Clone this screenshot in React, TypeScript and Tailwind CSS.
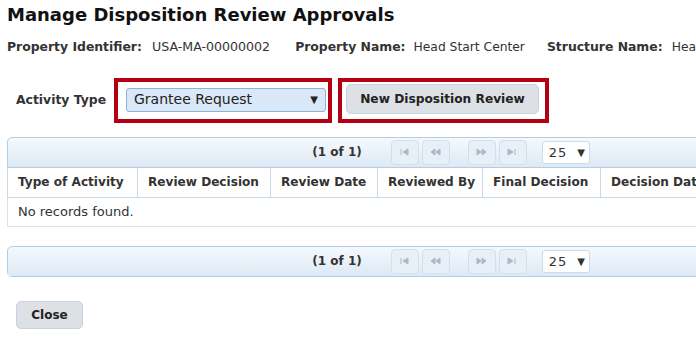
import React from 'react';

const columns = [
  { label: 'Type of Activity', w: 'w-[129px]' },
  { label: 'Review Decision', w: 'w-[133px]' },
  { label: 'Review Date', w: 'w-[107px]' },
  { label: 'Reviewed By', w: 'w-[105px]' },
  { label: 'Final Decision', w: 'w-[118px]' },
  { label: 'Decision Date', w: 'w-[130px]' },
  { label: 'Comments', w: 'flex-1' },
];

const PageIcon: React.FC<{ kind: 'first' | 'prev' | 'next' | 'last' }> = ({ kind }) => {
  // tiny disabled jQuery-UI style arrows
  const paths: Record<string, string> = {
    first: 'M2 2v6M9 2L4 5l5 3z',
    prev: 'M5 2L1 5l4 3zM10 2L6 5l4 3z',
    next: 'M1 2l4 3-4 3zM6 2l4 3-4 3z',
    last: 'M1 2l5 3-5 3zM8 2v6',
  };
  return (
    <svg width="11" height="10" viewBox="0 0 11 10" className="text-[#a9b9c9]">
      <path d={paths[kind]} fill="currentColor" stroke="currentColor" strokeWidth="1" />
    </svg>
  );
};

const PageButton: React.FC<{ kind: 'first' | 'prev' | 'next' | 'last' }> = ({ kind }) => (
  <div className="w-[28px] h-[25px] flex items-center justify-center rounded-[4px] border border-[#d3e0ec] bg-[#e7eff7]">
    <PageIcon kind={kind} />
  </div>
);

const Paginator: React.FC = () => (
  <div className="h-[31px] flex items-center justify-center rounded-t-[5px] border border-[#b5cde2] bg-gradient-to-b from-[#f5f9fd] to-[#dde9f4]">
    <span className="font-bold text-[12px] mr-[29px]">(1 of 1)</span>
    <div className="flex gap-[3px]">
      <PageButton kind="first" />
      <PageButton kind="prev" />
    </div>
    <div className="flex gap-[3px] ml-[18px]">
      <PageButton kind="next" />
      <PageButton kind="last" />
    </div>
    <div className="ml-[15px] w-[48px] h-[23px] bg-white border border-[#cfdce8] rounded-[3px] flex items-center pl-[6px] gap-[10px] text-[13px]">
      <span className="tracking-[1px]">25</span>
      <span className="text-[10px]">▼</span>
    </div>
  </div>
);

const App: React.FC = () => {
  return (
    <div
      className="w-[696px] h-[338px] overflow-hidden bg-white text-[#333]"
      style={{ fontFamily: '"DejaVu Sans", Verdana, sans-serif' }}
    >
      <div className="pl-[7px] pt-[3px]">
        {/* Title */}
        <h1 className="text-[18px] font-bold text-[#111] leading-[24px]">Manage Disposition Review Approvals</h1>

        {/* Property info */}
        <div className="flex items-center mt-[11px] text-[12.4px] whitespace-nowrap">
          <span className="font-bold">Property Identifier:</span>
          <span className="ml-[10px] text-[12.6px]">USA-MA-00000002</span>
          <span className="font-bold ml-[25px]">Property Name:</span>
          <span className="ml-[8px] text-[12.3px]">Head Start Center</span>
          <span className="font-bold ml-[22px]">Structure Name:</span>
          <span className="ml-[9px] text-[12.3px]">Head Start Center</span>
        </div>

        {/* Activity row */}
        <div className="flex items-center mt-[21px]">
          <span className="ml-[9px] w-[98px] font-bold text-[12.4px] text-[#333]">Activity Type</span>
          <div className="w-[218px] h-[45px] border-4 border-[#b30012] pl-[8px] pt-[6px]">
            <div className="w-[200px] h-[24px] rounded-[3px] border border-[#8fb4d6] bg-[#d9e8f7] flex items-center justify-between pl-[7px] pr-[7px] text-[14px] text-[#222]">
              <span>Grantee Request</span>
              <span className="text-[10px]">▼</span>
            </div>
          </div>
          <div className="ml-[6px] w-[211px] h-[45px] border-4 border-[#b30012] pl-[4px] pt-[2px]">
            <div className="w-[193px] h-[30px] rounded-[5px] border border-[#c5d3e0] bg-[#dde0e4] flex items-center justify-center font-bold text-[12.2px] text-[#222]">
              New Disposition Review
            </div>
          </div>
        </div>

        {/* Table top */}
        <div className="w-[888px] mt-[14px]">
          <Paginator />
          <div className="flex h-[30px] border-x border-b border-[#c5d9e8] text-[12.1px] font-bold">
            {columns.map((c, i) => (
              <div
                key={c.label}
                className={`${c.w} flex items-center pl-[10px] whitespace-nowrap ${i > 0 ? 'border-l border-[#c5d9e8]' : ''}`}
              >
                {c.label}
              </div>
            ))}
          </div>
          <div className="h-[29px] flex items-center pl-[10px] border-x border-b border-[#dde3e8] text-[13px]">
            No records found.
          </div>
        </div>

        {/* Table bottom */}
        <div className="w-[888px] mt-[19px]">
          <div className="rounded-b-[5px] overflow-hidden">
            <Paginator />
          </div>
        </div>

        {/* Close */}
        <div className="mt-[24px] ml-[9px] w-[67px] h-[28px] rounded-[5px] border border-[#c5d3e0] bg-[#dde0e4] flex items-center justify-center font-bold text-[12px] text-[#222]">
          Close
        </div>
      </div>
    </div>
  );
};

export default App;
